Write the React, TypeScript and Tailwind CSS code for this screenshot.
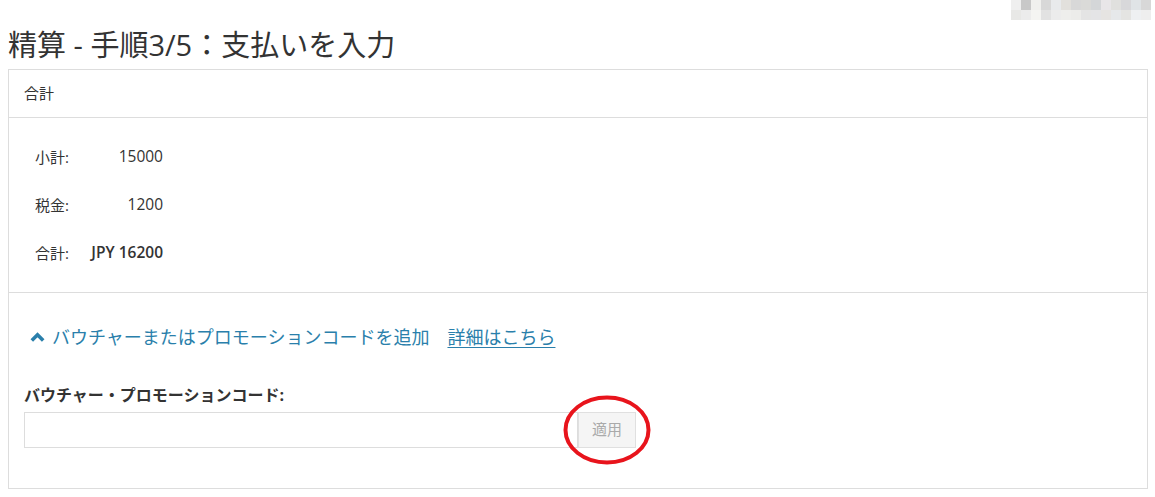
import React from "react";

const row1 = ["#efefef", "#c8c8c8", "#f0f0ee", "#d8d8d8", "#e8eaec", "#e2e0dc", "#d8d8d8", "#dadad8", "#d4d6d8", "#e8e6e8", "#e0e0de", "#d8d8da", "#e0e4e6", "#d8d8d8"];
const row2 = ["#e8e8e6", "#ececec", "#f4f4f2", "#e2e2e2", "#ececec", "#eeeeec", "#ececea", "#e4e4e4", "#e4e4e6", "#e6e4e2", "#e6e8ea", "#e4e4e2", "#eef0f2", "#eeeeee"];

export default function App() {
  const font = { fontFamily: '"Open Sans", "Noto Sans CJK JP", sans-serif' };
  return (
    <div className="w-[1155px] h-[497px] bg-white text-[#333] overflow-hidden" style={font}>
      <div className="flex justify-end h-[20px] pr-[4px]">
        <div className="flex flex-col">
          <div className="flex h-[10px]">
            {row1.map((c, i) => (
              <div key={i} className="w-[10px] h-[10px]" style={{ backgroundColor: c }} />
            ))}
          </div>
          <div className="flex h-[10px]">
            {row2.map((c, i) => (
              <div key={i} className="w-[10px] h-[10px]" style={{ backgroundColor: c }} />
            ))}
          </div>
        </div>
      </div>
      <h1 className="pl-[8px] text-[29px] leading-[40px] h-[49px] pt-[5px] font-normal text-[#333]">
        精算 - 手順3/5：支払いを入力
      </h1>
      <div className="ml-[8px] w-[1140px] h-[420px] border border-[#dddddd]">
        <div className="h-[48px] border-b border-[#dddddd] px-[15px] flex items-center text-[15px]">
          合計
        </div>
        <div className="h-[175px] border-b border-[#dddddd] pt-[15px] pl-[26px] text-[15px]">
          <div className="flex items-center h-[48px]">
            <div className="w-[50px]">小計:</div>
            <div className="w-[78px] text-right text-[15.5px]">15000</div>
          </div>
          <div className="flex items-center h-[48px]">
            <div className="w-[50px]">税金:</div>
            <div className="w-[78px] text-right text-[15.5px]">1200</div>
          </div>
          <div className="flex items-center h-[48px]">
            <div className="w-[50px]">合計:</div>
            <div className="w-[78px] text-right font-semibold text-[15.5px]">JPY 16200</div>
          </div>
        </div>
        <div className="px-[15px] pt-[31px]">
          <div className="flex items-center h-[26px] text-[18px] text-[#2a7fab]">
            <svg width="15" height="10" viewBox="0 0 15 10" className="ml-[6px] mr-[7px]">
              <polyline points="1.8,8.5 7.5,2.8 13.2,8.5" fill="none" stroke="#2a7fab" strokeWidth="3.6" />
            </svg>
            <span>バウチャーまたはプロモーションコードを追加</span>
            <a className="ml-[18px] underline underline-offset-[3px]" href="#">詳細はこちら</a>
          </div>
          <div className="mt-[34px] text-[16px] font-bold leading-[22px] h-[28px]">
            バウチャー・プロモーションコード:
          </div>
          <div className="flex h-[36px]">
            <input className="w-[554px] h-[36px] border border-[#dddddd] outline-none" />
            <div className="relative">
              <button className="w-[58px] h-[36px] bg-[#f5f5f5] border border-[#e0e0e0] text-[15px] leading-[20px] pb-[2px] text-[#aaaaaa]">
                適用
              </button>
              <svg
                className="absolute pointer-events-none"
                style={{ left: -15, top: -17 }}
                width="88"
                height="70"
                viewBox="0 0 88 70"
              >
                <ellipse cx="44" cy="35" rx="41.5" ry="32.5" fill="none" stroke="#e8141c" strokeWidth="4" />
              </svg>
            </div>
          </div>
        </div>
      </div>
    </div>
  );
}
